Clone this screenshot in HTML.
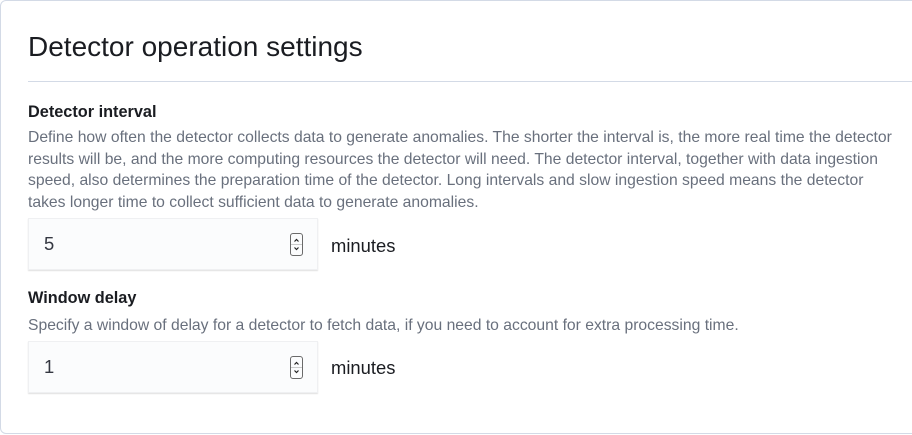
<!DOCTYPE html>
<html><head><style>
body{margin:0;width:912px;height:435px;overflow:hidden;background:#fff;font-family:"Liberation Sans",sans-serif;}
.panel{position:absolute;left:0;top:0;width:920px;height:434px;border:1px solid #d3dae6;border-radius:6px;box-sizing:border-box;}
h1{position:absolute;left:28px;top:31px;margin:0;font-size:28px;font-weight:400;color:#1a1c21;white-space:nowrap;}
.hr{position:absolute;left:28px;top:81px;width:900px;height:1px;background:#d3dae6;}
.lbl{position:absolute;left:28px;font-size:16.3px;font-weight:bold;color:#1a1c21;}
.desc{position:absolute;left:28px;width:880px;font-size:15.7px;line-height:21.6px;color:#69707d;white-space:nowrap;}
.inp{position:absolute;left:28px;width:290px;height:52px;background:#fbfcfd;box-shadow:0 1px 1px rgba(0,0,0,.12),0 0 0 1px rgba(52,55,65,.06) inset;}
.inp span{position:absolute;left:16px;top:15px;font-size:18.4px;color:#343741;}
.spin{position:absolute;left:262px;top:15px;width:13px;height:23px;border:1px solid #6a6a6a;border-radius:3px;box-sizing:border-box;}
.spin svg{position:absolute;left:0;top:0;}
.unit{position:absolute;left:331px;font-size:18.4px;color:#1a1c21;}
</style></head><body>
<div class="panel"></div>
<h1>Detector operation settings</h1>
<div class="hr"></div>
<div class="lbl" style="top:103px">Detector interval</div>
<div class="desc" style="top:127px">Define how often the detector collects data to generate anomalies. The shorter the interval is, the more real time the detector<br>results will be, and the more computing resources the detector will need. The detector interval, together with data ingestion<br>speed, also determines the preparation time of the detector. Long intervals and slow ingestion speed means the detector<br>takes longer time to collect sufficient data to generate anomalies.</div>
<div class="inp" style="top:218px"><span>5</span><div class="spin"><svg width="11" height="21"><path d="M3.5 7.5L5.5 5.5L7.5 7.5M3.5 13.5L5.5 15.5L7.5 13.5" stroke="#222" stroke-width="1.2" fill="none"/><line x1="0" y1="10.5" x2="11" y2="10.5" stroke="#aaa" stroke-width="0.6"/></svg></div></div>
<div class="unit" style="top:235px">minutes</div>
<div class="lbl" style="top:289px">Window delay</div>
<div class="desc" style="top:315px">Specify a window of delay for a detector to fetch data, if you need to account for extra processing time.</div>
<div class="inp" style="top:341px"><span>1</span><div class="spin"><svg width="11" height="21"><path d="M3.5 7.5L5.5 5.5L7.5 7.5M3.5 13.5L5.5 15.5L7.5 13.5" stroke="#222" stroke-width="1.2" fill="none"/><line x1="0" y1="10.5" x2="11" y2="10.5" stroke="#aaa" stroke-width="0.6"/></svg></div></div>
<div class="unit" style="top:357px">minutes</div>
</body></html>
